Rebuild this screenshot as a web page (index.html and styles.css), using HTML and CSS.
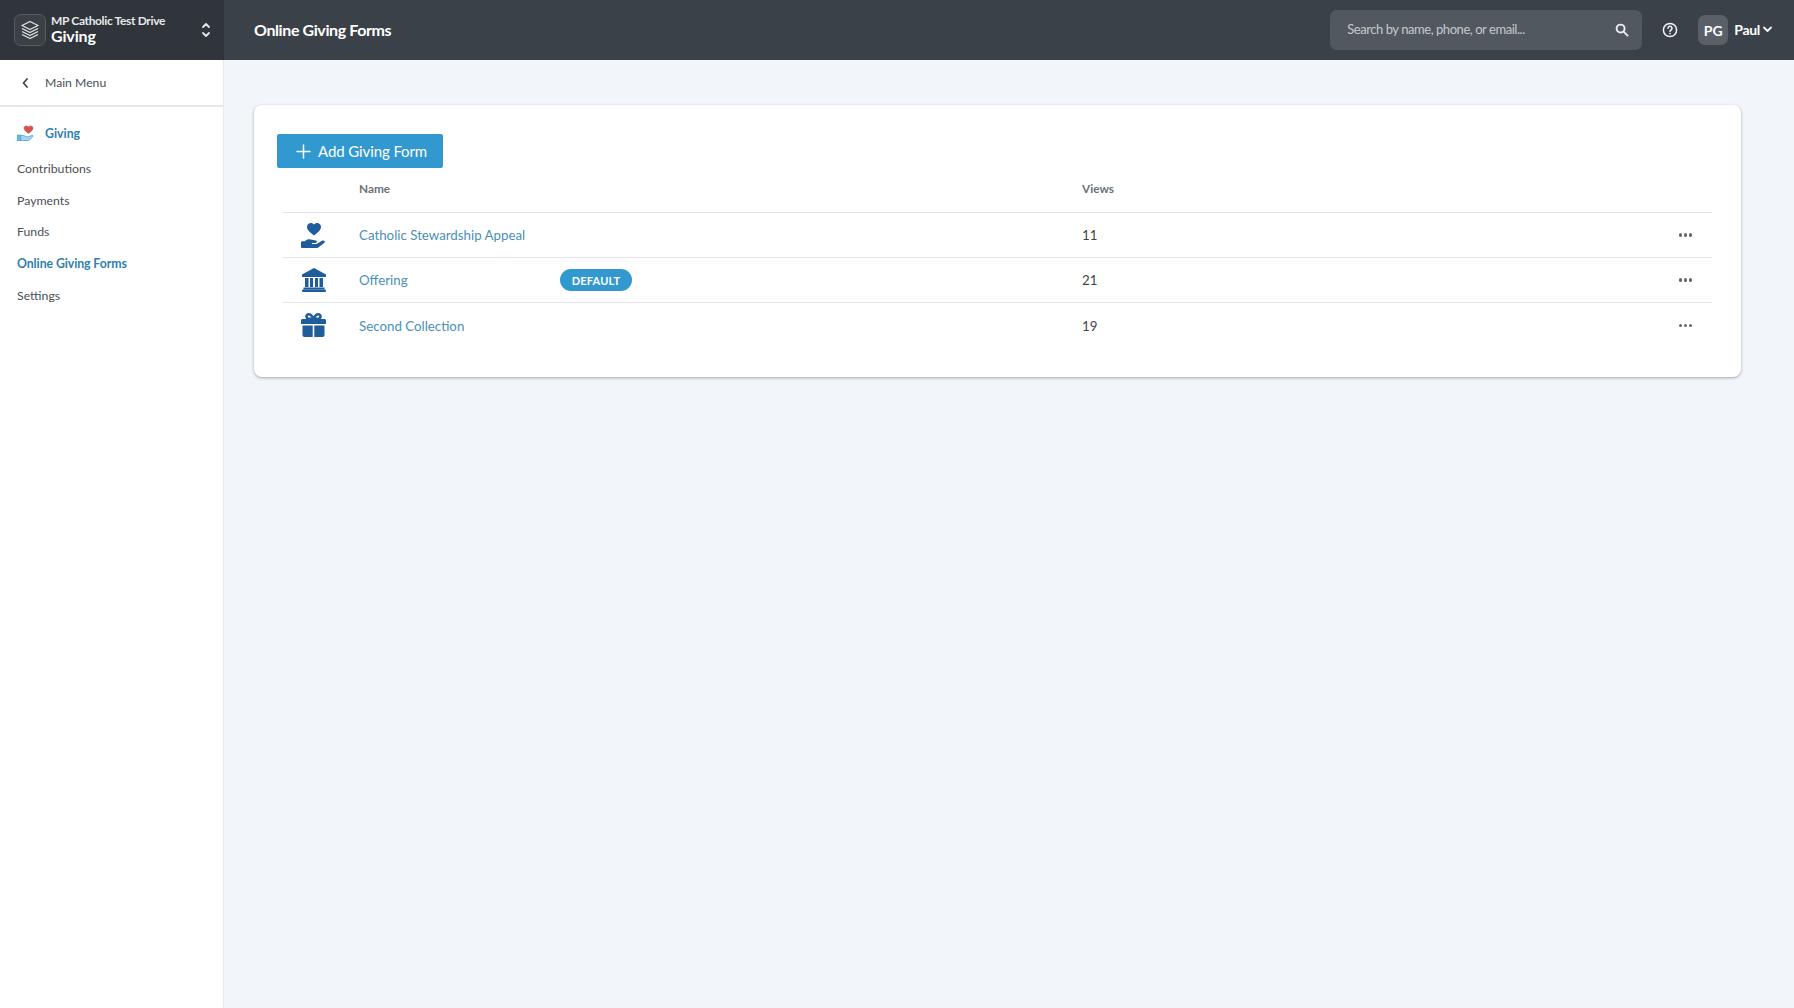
FILE: index.html
```html
<!DOCTYPE html>
<html lang="en">
<head>
<meta charset="utf-8">
<title>Online Giving Forms</title>
<link rel="stylesheet" href="styles.css">
</head>
<body>
<div class="app">
  <header class="topbar">
    <div class="switcher">
      <div class="logo">
        <svg width="20" height="20" viewBox="0 0 20 20" fill="none" stroke="#e4e6e8" stroke-width="1.3" stroke-linejoin="round"><path d="M10 1.5l8 4-8 4-8-4z"/><path d="M2 8.5l8 4 8-4"/><path d="M2 11.5l8 4 8-4"/><path d="M2 14.5l8 4 8-4"/></svg>
      </div>
      <div class="switcher-text">
        <div class="org">MP Catholic Test Drive</div>
        <div class="app-name">Giving</div>
      </div>
      <svg class="updown" width="10" height="16" viewBox="0 0 10 16" fill="none" stroke="#e4e6e8" stroke-width="1.8" stroke-linecap="round" stroke-linejoin="round"><path d="M2 5l3-3 3 3"/><path d="M2 11l3 3 3-3"/></svg>
    </div>
    <div class="topbar-main">
      <h1 class="page-title">Online Giving Forms</h1>
      <div class="search">
        <span class="search-text">Search by name, phone, or email...</span>
        <svg width="14" height="14" viewBox="0 0 14 14" fill="none" stroke="#eceef0" stroke-width="1.9" stroke-linecap="round"><circle cx="5.6" cy="5.6" r="4"/><path d="M8.6 8.6l4 4"/></svg>
      </div>
      <svg class="help" width="16" height="16" viewBox="0 0 16 16" fill="none" stroke="#f2f3f4" stroke-width="1.5" stroke-linecap="round"><circle cx="8" cy="8" r="6.6"/><path d="M6 6.3a2 2 0 1 1 3 1.7c-.7.4-1 .8-1 1.5"/><path d="M8 11.6v.2"/></svg>
      <div class="avatar">PG</div>
      <div class="user">Paul</div>
      <svg class="caret" width="9" height="7" viewBox="0 0 9 7" fill="none" stroke="#f2f3f4" stroke-width="1.8" stroke-linecap="round" stroke-linejoin="round"><path d="M1 1.5l3.5 3.5L8 1.5"/></svg>
    </div>
  </header>
  <div class="body">
    <aside class="sidebar">
      <div class="back">
        <svg width="7" height="10" viewBox="0 0 7 10" fill="none" stroke="#3c4248" stroke-width="1.7" stroke-linecap="round" stroke-linejoin="round"><path d="M5 1L1.5 5 5 9"/></svg>
        <span>Main Menu</span>
      </div>
      <nav class="nav">
        <div class="nav-head">
          <svg width="17" height="16" viewBox="0 0 17 16"><path d="M11.500 8.500C9 6.500 7 5 7 3 7 1 10 0 11.500 2 13 0 16 1 16 3 16 5 14 6.500 11.500 8.500z" fill="#d9534a" stroke="#a8443c" stroke-width=".5"/><rect x=".3" y="10" width="3.400" height="5.700" fill="#6db9e3" stroke="#3d9ad0" stroke-width=".6"/><path d="M3.700 10.500h3l2.500 1.200h2.300l4-1.400c.8 0 .9 1 .2 1.500L11.800 15.500H3.700z" fill="#a5d6f0" stroke="#3d9ad0" stroke-width=".7"/></svg>
          <span>Giving</span>
        </div>
        <a class="nav-item">Contributions</a>
        <a class="nav-item">Payments</a>
        <a class="nav-item">Funds</a>
        <a class="nav-item is-active">Online Giving Forms</a>
        <a class="nav-item">Settings</a>
      </nav>
    </aside>
    <main class="content">
      <section class="card">
        <button class="add-btn">
          <svg width="15" height="15" viewBox="0 0 15 15" stroke="#fff" stroke-width="1.500" stroke-linecap="round"><path d="M7.500 1v13M1 7.500h13"/></svg>
          <span>Add Giving Form</span>
        </button>
        <div class="table">
          <div class="row head">
            <div></div>
            <div>Name</div>
            <div></div>
            <div>Views</div>
            <div></div>
          </div>
          <div class="row">
            <div class="cell-icon">
              <svg width="28" height="27" viewBox="0 0 28 27" fill="#1f5c9c"><path d="M14 13.500C9.500 10 7 7.800 7 4.800 7 1 12 -.5 14 2.500 16 -.5 21 1 21 4.800 21 7.800 18.500 10 14 13.500z"/><path d="M1 20.500c0-.8.500-1.300 1.300-1.300H5c1.500-1.700 3.500-2.200 5.500-1.800l5.500 1c1.100.2 1.300 2.500-.5 2.600h-3.500v1h4.500l6-3.400c1.500-.7 3.200 1 1.900 2.200l-6.200 4.700c-.6.400-1.200.6-1.900.6H2.300c-.8 0-1.300-.5-1.300-1.300z"/></svg>
            </div>
            <a class="name">Catholic Stewardship Appeal</a>
            <div></div>
            <div class="views">11</div>
            <div class="dots"><i></i><i></i><i></i></div>
          </div>
          <div class="row">
            <div class="cell-icon">
              <svg width="26" height="26" viewBox="0 0 26 26" fill="#1f5c9c"><path d="M13 1L25 7.500V10H1V7.500z"/><rect x="4" y="11" width="3.500" height="9"/><rect x="9" y="11" width="3" height="9"/><rect x="14" y="11" width="3" height="9"/><rect x="18.500" y="11" width="3.500" height="9"/><rect x="2.500" y="20.500" width="21" height="2"/><rect x="1" y="22.500" width="24" height="2.500" rx="1"/></svg>
            </div>
            <a class="name">Offering</a>
            <div><span class="badge">DEFAULT</span></div>
            <div class="views">21</div>
            <div class="dots"><i></i><i></i><i></i></div>
          </div>
          <div class="row last">
            <div class="cell-icon">
              <svg class="gift" width="27" height="24" viewBox="0 0 27 24" fill="#1f5c9c"><path fill-rule="evenodd" d="M1 7.500C1 6.700 1.700 6 2.500 6h3.800C5.500 5.300 5.200 4.400 5.200 3.500 5.200 1.500 6.800 0 8.800 0c2.200 0 3.500 1.300 4.700 3.300C14.700 1.300 16 0 18.200 0c2 0 3.600 1.500 3.600 3.500 0 .9-.3 1.800-1.100 2.500h3.800c.8 0 1.500.7 1.500 1.500V11H1zM8.800 2.500c-.6 0-1 .5-1 1s.4 1 1 1h2.600C10.500 3.200 9.700 2.500 8.800 2.500zm9.400 0c-.9 0-1.700.7-2.600 2h2.600c.6 0 1-.5 1-1s-.4-1-1-1z"/><path d="M2.500 12.500h10.200V24H4.500c-1.100 0-2-.9-2-2zM14.300 12.500h10.200V22c0 1.100-.9 2-2 2h-8.200z"/></svg>
            </div>
            <a class="name">Second Collection</a>
            <div></div>
            <div class="views">19</div>
            <div class="dots"><i></i><i></i><i></i></div>
          </div>
        </div>
      </section>
    </main>
  </div>
</div>
</body>
</html>
```
FILE: styles.css
```css
* { box-sizing: border-box; }
html, body { margin: 0; height: 100%; }
body {
  font-family: Lato, "Open Sans", sans-serif;
  background: #f2f6fb;
  color: #3f444a;
  overflow: hidden;
}
.app { display: flex; flex-direction: column; height: 100vh; }
.topbar { display: flex; height: 60px; flex: none; background: #3b4149; color: #fff; }
.switcher {
  width: 224px;
  flex: none;
  background: #30343b;
  display: flex;
  align-items: center;
  padding: 0 13px 0 14px;
}
.logo {
  width: 32px;
  height: 32px;
  border: 1px solid #565b62;
  border-radius: 7px;
  background: #3b4047;
  display: flex;
  align-items: center;
  justify-content: center;
  flex: none;
}
.switcher-text { flex: 1; margin: 0 0 3px 5px; }
.org { font-size: 12px; font-weight: 700; line-height: 14px; color: #e6e8ea; letter-spacing: -.35px; }
.app-name { font-size: 16px; font-weight: 700; line-height: 16px; letter-spacing: -.15px; }
.updown { flex: none; }
.topbar-main { flex: 1; display: flex; align-items: center; padding: 0 22px 0 30px; }
.page-title { margin: 0 0 2px; font-size: 16px; font-weight: 700; letter-spacing: -.4px; flex: 1; }
.search {
  width: 312px;
  height: 40px;
  background: #52585f;
  border-radius: 7px;
  display: flex;
  align-items: center;
  justify-content: space-between;
  padding: 0 13px 0 17px;
}
.search-text { font-size: 13px; margin-bottom: 2px; color: #c5c8cb; letter-spacing: -.45px; }
.help { margin-left: 20px; flex: none; }
.avatar {
  width: 30px;
  height: 30px;
  margin-left: 20px;
  border-radius: 7px;
  background: #5a6067;
  display: flex;
  align-items: center;
  justify-content: center;
  font-size: 14px;
  font-weight: 700;
}
.user { margin: 0 3px 2px 6px; font-size: 14px; font-weight: 700; letter-spacing: -.3px; }
.caret { margin-bottom: 2px; }
.body { flex: 1; display: flex; min-height: 0; }
.sidebar { width: 224px; flex: none; background: #fff; border-right: 1px solid #e6e9ee; }
.back {
  height: 47px;
  display: flex;
  align-items: center;
  padding-left: 22px;
  gap: 16px;
  border-bottom: 2px solid #e4e6e9;
  font-size: 12.2px;
  color: #4a5056;
}
.nav { padding: 15px 0 0 17px; display: flex; flex-direction: column; }
.nav-head {
  display: flex;
  align-items: center;
  gap: 11px;
  height: 22px;
  font-size: 12.3px;
  font-weight: 700;
  color: #2f7faf;
  margin-bottom: 8.5px;
}
.nav-item { height: 31.75px; display: flex; align-items: center; font-size: 12.3px; color: #4a5056; }
.is-active { color: #2f7faf; font-weight: 700; letter-spacing: -.08px; }
.content { flex: 1; padding: 45px 53px 0 30px; }
.card {
  height: 272px;
  background: #fff;
  border-radius: 8px;
  box-shadow: 0 1px 3px rgba(60, 70, 80, .45);
  padding: 29px 29px 0 23px;
}
.add-btn {
  width: 166px;
  height: 34px;
  border: 0;
  border-radius: 2px;
  background: #3298d0;
  color: #fff;
  font-family: inherit;
  font-size: 15px;
  display: flex;
  align-items: center;
  gap: 7px;
  padding: 0 0 0 19px;
  letter-spacing: -.1px;
}
.table { margin-left: 6px; }
.row {
  display: grid;
  grid-template-columns: 76px 201px 522px 1fr 60px;
  align-items: center;
  height: 45px;
  border-bottom: 1px solid #e2e4e7;
  font-size: 13.3px;
}
.row.last { border-bottom: 0; }
.row.head { height: 45px; font-size: 11.8px; font-weight: 700; color: #6b7076; padding-bottom: 4px; }
.cell-icon { display: flex; justify-content: center; width: 61px; }
.gift { margin-bottom: 2px; }
.name { color: #4b8fb8; }
.badge {
  display: inline-flex;
  align-items: center;
  justify-content: center;
  width: 72px;
  height: 22px;
  border-radius: 11px;
  background: #3298d0;
  color: #fff;
  font-size: 11px;
  font-weight: 700;
  letter-spacing: .2px;
}
.views { color: #3f444a; }
.dots { display: flex; gap: 1.500px; justify-content: flex-end; padding-right: 20px; }
.dots i { width: 3.500px; height: 3.500px; border-radius: 50%; background: #64686d; }
```
